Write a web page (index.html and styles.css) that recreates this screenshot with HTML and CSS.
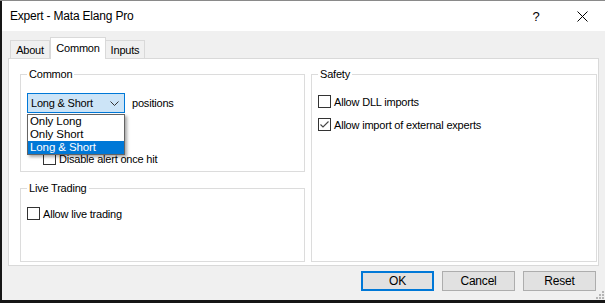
FILE: index.html
```html
<!DOCTYPE html>
<html lang="en">
<head>
  <meta charset="UTF-8">
  <meta name="viewport" content="width=device-width, initial-scale=1.0">
  <title>Expert - Mata Elang Pro</title>
  <link rel="stylesheet" href="styles.css">
</head>
<body>
  <div class="window">
    <div class="titlebar">
      <span class="title">Expert - Mata Elang Pro</span>
      <span class="captionBtn">?</span>
      <span class="captionBtn">
        <svg width="11" height="11" viewBox="0 0 11 11"><path d="M0.5 0.5 L10.5 10.5 M10.5 0.5 L0.5 10.5" stroke="#000" stroke-width="1" fill="none"/></svg>
      </span>
    </div>
    <div class="client">
      <div class="tabs">
        <div class="tab tabAbout">About</div>
        <div class="tab tabCommon active">Common</div>
        <div class="tab tabInputs">Inputs</div>
      </div>
      <div class="panel">
        <div class="leftCol">
          <fieldset class="group groupCommon">
            <legend>Common</legend>
            <div class="comboRow">
              <div class="combo">
                <span class="comboText">Long &amp; Short</span>
                <svg class="chevron" width="9" height="5" viewBox="0 0 9 5"><path d="M0.5 0.5 L4.5 4.5 L8.5 0.5" stroke="#333" stroke-width="1" fill="none"/></svg>
                <ul class="comboList">
                  <li>Only Long</li>
                  <li>Only Short</li>
                  <li class="selected">Long &amp; Short</li>
                </ul>
              </div>
              <span>positions</span>
            </div>
            <div class="check indent"><span class="box"></span>Disable alert once hit</div>
          </fieldset>
          <fieldset class="group groupLive">
            <legend>Live Trading</legend>
            <div class="check first"><span class="box"></span>Allow live trading</div>
          </fieldset>
        </div>
        <fieldset class="group groupSafety">
          <legend>Safety</legend>
          <div class="check first"><span class="box"></span>Allow DLL imports</div>
          <div class="check second"><span class="box">
            <svg width="11" height="11" viewBox="0 0 11 11"><path d="M1.5 5.5 L4 8 L9.5 2.5" stroke="#444" stroke-width="1.1" fill="none"/></svg>
          </span>Allow import of external experts</div>
        </fieldset>
      </div>
      <div class="buttons">
        <div class="btn default">OK</div>
        <div class="btn">Cancel</div>
        <div class="btn">Reset</div>
      </div>
    </div>
    <svg class="grip" width="8" height="8" viewBox="0 0 8 8">
      <rect x="6" y="0" width="2" height="2" fill="#b5b5b5"/>
      <rect x="3" y="3" width="2" height="2" fill="#b5b5b5"/>
      <rect x="6" y="3" width="2" height="2" fill="#b5b5b5"/>
      <rect x="0" y="6" width="2" height="2" fill="#b5b5b5"/>
      <rect x="3" y="6" width="2" height="2" fill="#b5b5b5"/>
      <rect x="6" y="6" width="2" height="2" fill="#b5b5b5"/>
    </svg>
  </div>
</body>
</html>
```

FILE: styles.css
```css
body{
  margin: 0;
  width: 605px;
  height: 303px;
  overflow: hidden;
  background-color: #161616;
  border-top: 1px solid #8a8a8a;
  box-sizing: border-box;
  font-family: 'Liberation Sans', Arial, sans-serif;
  font-size: 11px;
  letter-spacing: -0.2px;
  color: #000;
}

.window{
  position: relative;
  margin-left: 2px;
  width: 603px;
  height: 299px;
  display: flex;
  flex-direction: column;
  background-color: #f0f0f0;
}

.titlebar{
  height: 30px;
  display: flex;
  align-items: center;
  background-color: #fff;
  padding-left: 8px;
}

.title{
  flex: 1;
  font-size: 12px;
}

.captionBtn{
  width: 46px;
  height: 30px;
  display: flex;
  align-items: center;
  justify-content: center;
  font-size: 13px;
}

.client{
  flex: 1;
  display: flex;
  flex-direction: column;
  padding: 6px 6px 0 6px;
}

.tabs{
  height: 21px;
  display: flex;
  align-items: flex-end;
  padding-left: 2px;
}

.tab{
  height: 18px;
  box-sizing: border-box;
  border: 1px solid #d9d9d9;
  border-bottom: none;
  background-color: #f0f0f0;
  display: flex;
  align-items: center;
  justify-content: center;
}

.tabAbout{
  width: 40px;
}

.tabCommon{
  width: 56px;
}

.tabInputs{
  width: 39px;
  border-left: none;
}

.tab.active{
  position: relative;
  z-index: 1;
  height: 22px;
  margin-bottom: -1px;
  background-color: #fff;
  padding-bottom: 2px;
}

.panel{
  height: 208px;
  box-sizing: border-box;
  border: 1px solid #d9d9d9;
  background-color: #fff;
  padding: 9px 1px 3px 11px;
  display: grid;
  grid-template-columns: 285px 286px;
  column-gap: 6px;
}

.leftCol{
  display: flex;
  flex-direction: column;
  gap: 10px;
}

.group{
  margin: 0;
  padding: 0 6px 0 6px;
  border: 1px solid #dcdcdc;
  min-width: 0;
}

.group legend{
  padding: 0 2px;
  line-height: 13px;
}

.groupCommon{
  height: 104px;
  box-sizing: border-box;
}

.groupLive{
  flex: 1;
}

.comboRow{
  display: flex;
  align-items: center;
  gap: 7px;
  margin-top: 12px;
}

.combo{
  position: relative;
  width: 98px;
  height: 20px;
  box-sizing: border-box;
  border: 1px solid #0078d7;
  background-color: #cce4f7;
  display: flex;
  align-items: center;
  padding-left: 3px;
}

.comboText{
  flex: 1;
}

.chevron{
  margin-right: 5px;
}

.comboList{
  position: absolute;
  top: 20px;
  left: -1px;
  width: 98px;
  margin: 0;
  padding: 0;
  list-style: none;
  box-sizing: border-box;
  border: 1px solid #646464;
  background-color: #fff;
  box-shadow: 2px 2px 3px rgba(0, 0, 0, 0.35);
  z-index: 2;
}

.comboList li{
  height: 13px;
  line-height: 13px;
  padding-left: 2px;
  font-size: 11.5px;
  letter-spacing: -0.1px;
}

.comboList li.selected{
  background-color: #0078d7;
  color: #fff;
}

.check{
  display: flex;
  align-items: center;
  gap: 3px;
  height: 13px;
}

.box{
  width: 13px;
  height: 13px;
  box-sizing: border-box;
  border: 1px solid #333;
  background-color: #fff;
  display: flex;
  align-items: center;
  justify-content: center;
}

.indent{
  margin-top: 39px;
  margin-left: 16px;
}

.groupLive .first{
  margin-top: 12px;
}

.groupSafety .first{
  margin-top: 14px;
}

.groupSafety .second{
  margin-top: 10px;
}

.buttons{
  display: flex;
  justify-content: flex-end;
  gap: 8px;
  margin-top: 5px;
  margin-right: 3px;
}

.btn{
  width: 73px;
  height: 20px;
  box-sizing: border-box;
  border: 1px solid #adadad;
  background-color: #e1e1e1;
  display: flex;
  align-items: center;
  justify-content: center;
  font-size: 12px;
}

.btn.default{
  border: 2px solid #0078d7;
}

.grip{
  position: absolute;
  right: 1px;
  bottom: 1px;
}
```
